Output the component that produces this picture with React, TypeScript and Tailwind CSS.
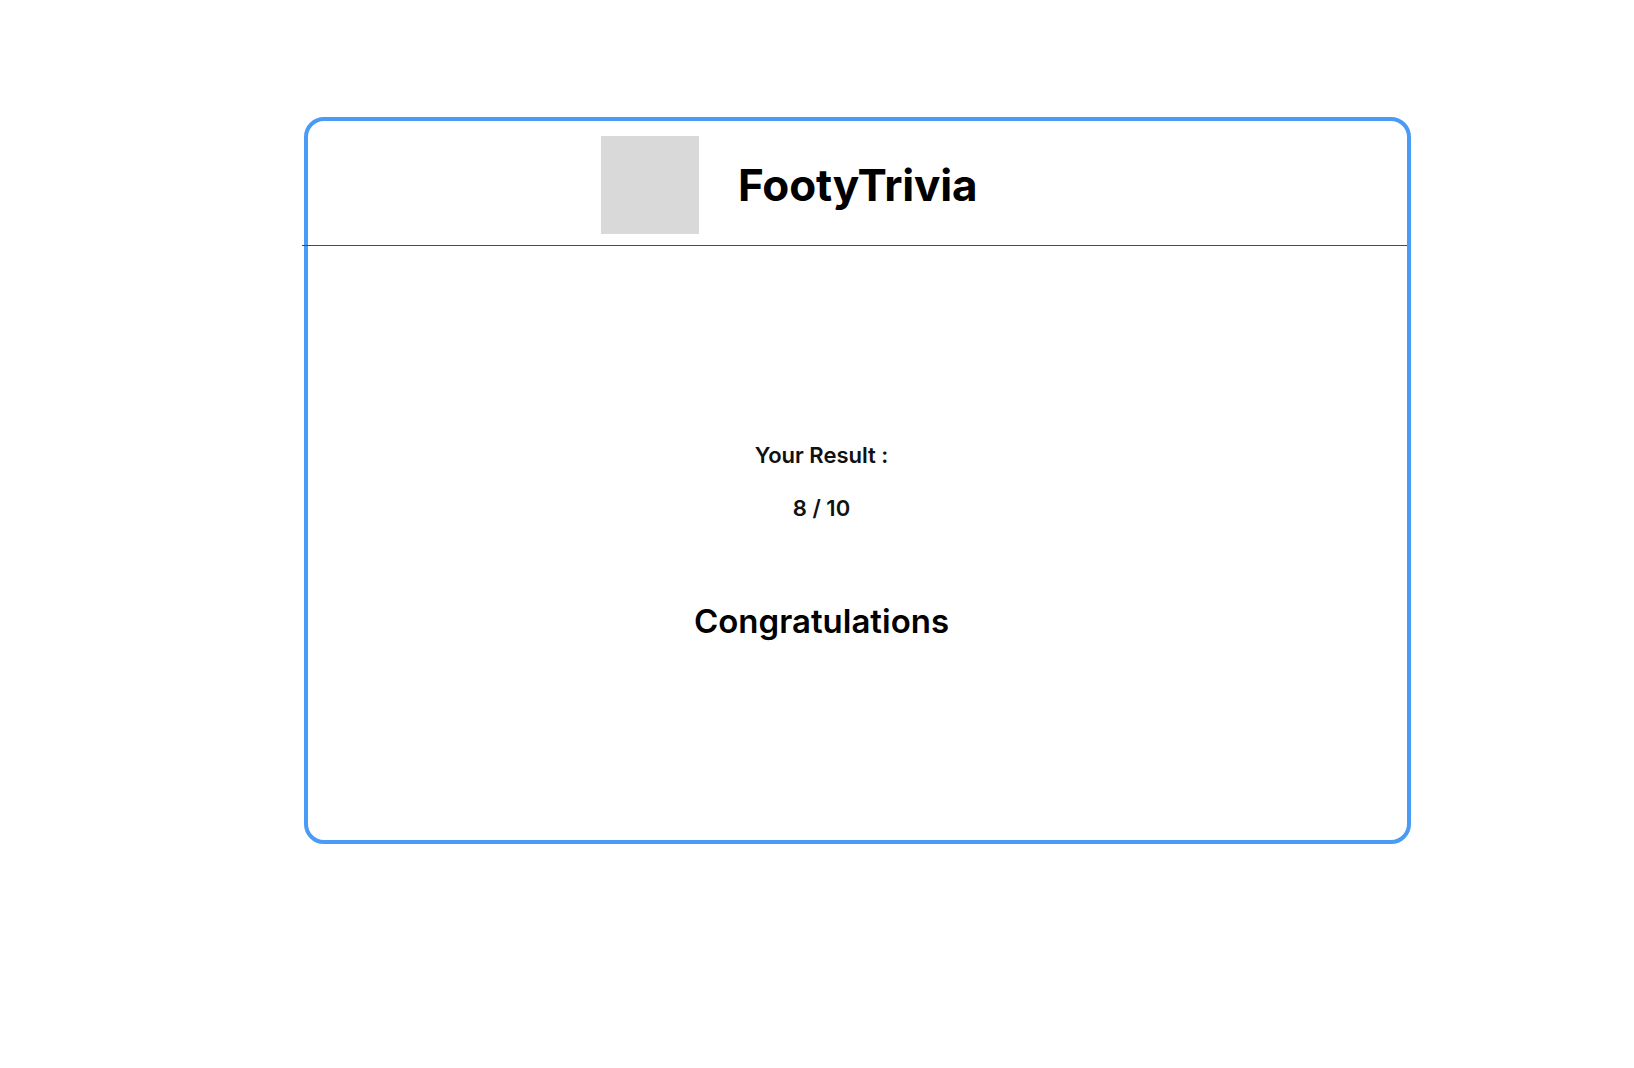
const font = { fontFamily: "Inter, 'Noto Sans', sans-serif" };

function Header() {
  return (
    <header className="flex h-[124px] items-center gap-[39px] pl-[293px] pt-[4px]">
      <div className="h-[98px] w-[98px] bg-[#d9d9d9]" aria-hidden="true" />
      <h1 className="text-[44px] font-bold leading-[52px] tracking-[-0.2px] text-black">FootyTrivia</h1>
    </header>
  );
}

function ResultPanel({ score, total }: { score: number; total: number }) {
  return (
    <section className="flex flex-col items-center pr-[72px] pt-[196px]">
      <p className="text-[22px] font-semibold leading-[26px] text-[#111]">Your Result :</p>
      <p className="mt-[27px] text-[22px] font-semibold leading-[26px] text-[#111]">
        {score} / {total}
      </p>
      <h2 className="mt-[80px] text-[33px] font-semibold leading-[40px] text-black">Congratulations</h2>
    </section>
  );
}

export default function App() {
  return (
    <main className="min-h-screen bg-white pl-[304px] pt-[117px]" style={font}>
      <div className="flex h-[727px] w-[1107px] flex-col rounded-[20px] border-4 border-[#4a9bf5] bg-white">
        <Header />
        <div className="-ml-[6px] h-px bg-[#4a4a4a]" />
        <ResultPanel score={8} total={10} />
      </div>
    </main>
  );
}
